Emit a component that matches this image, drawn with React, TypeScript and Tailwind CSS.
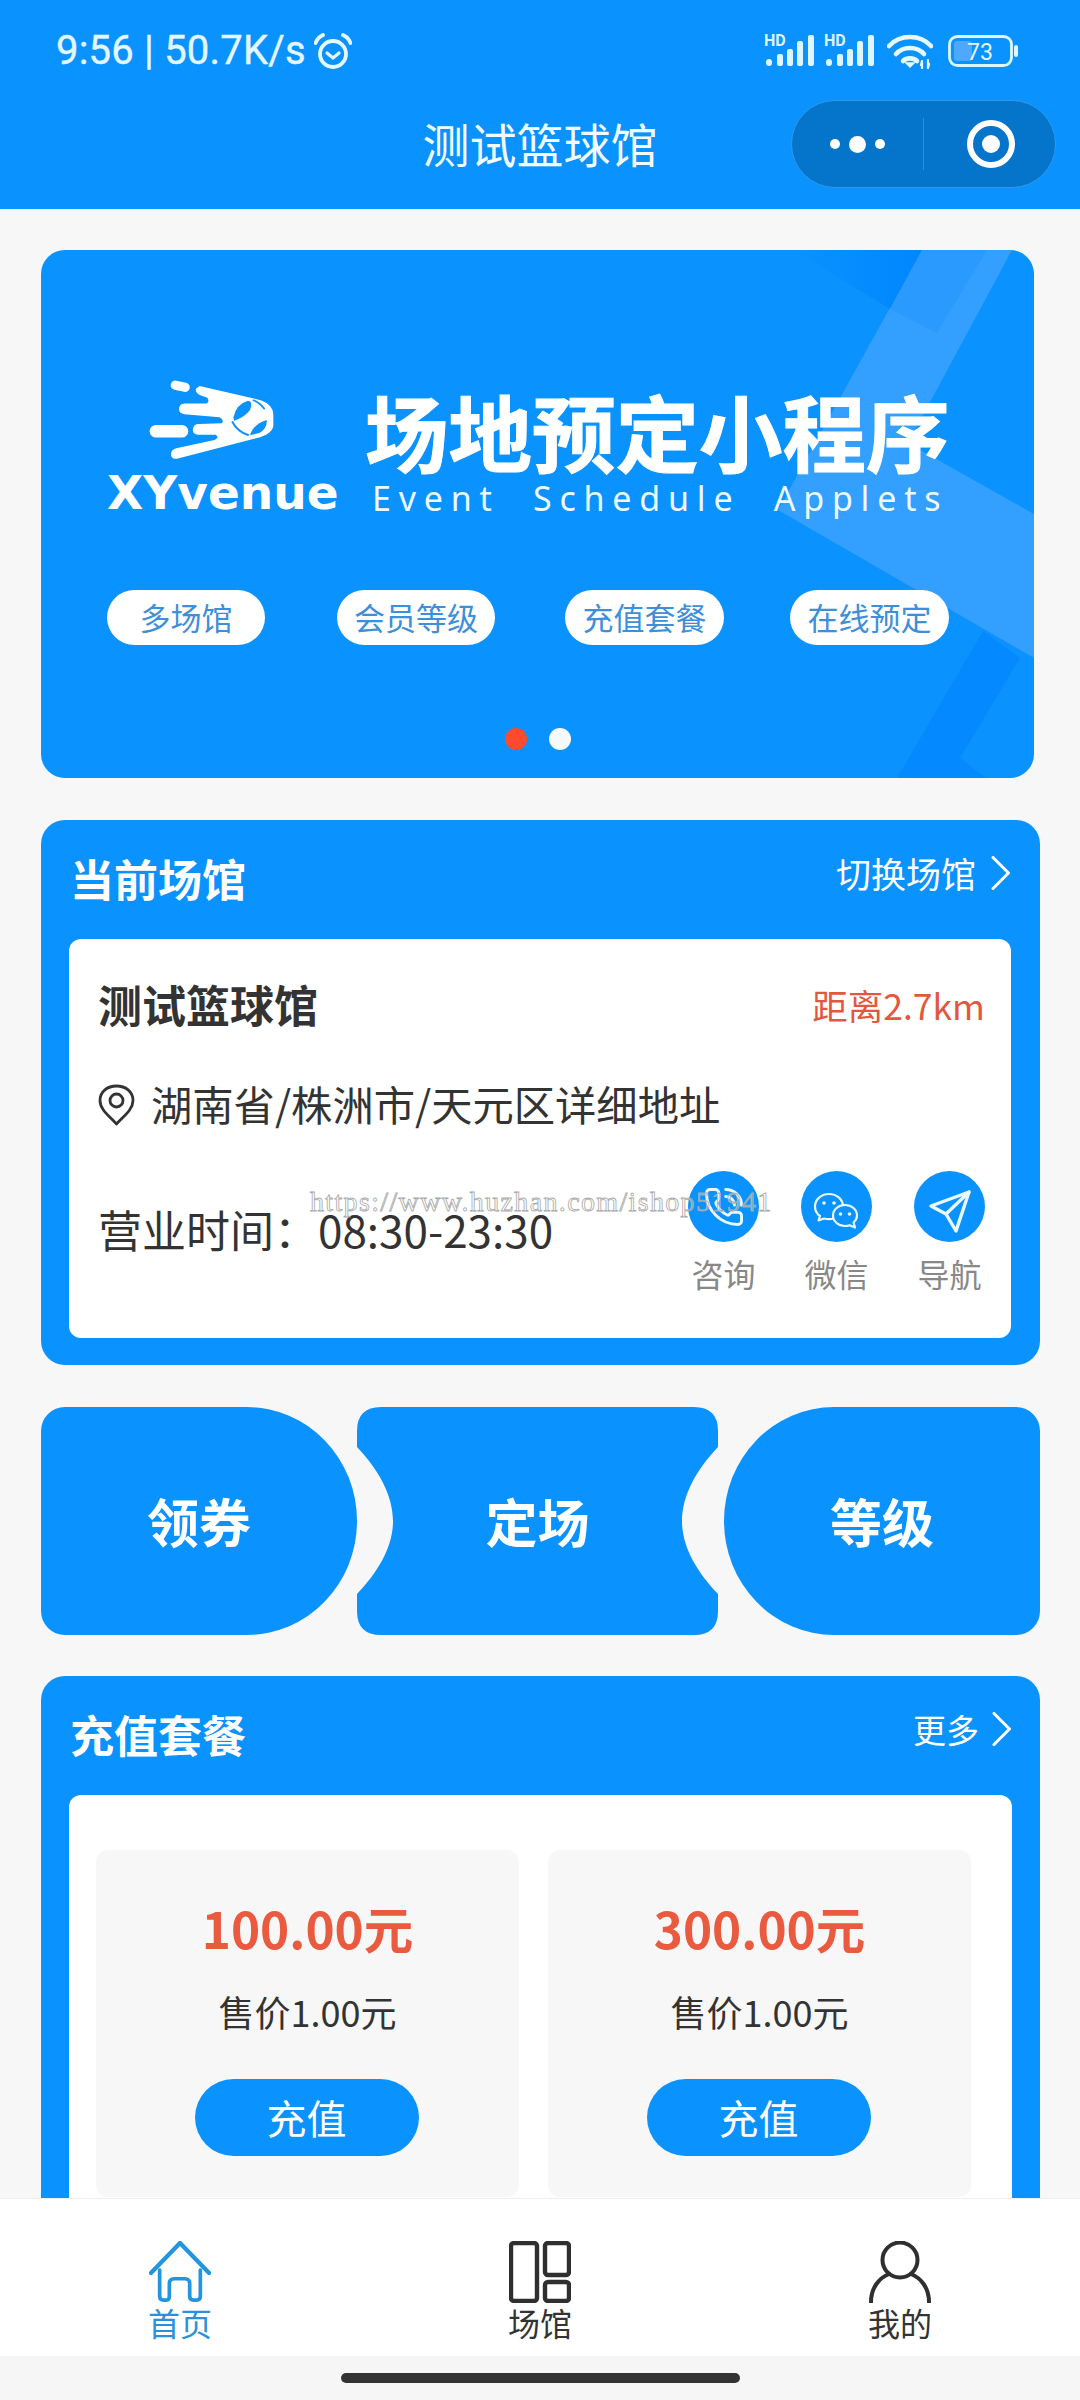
import type { ReactNode } from 'react';
import { PhoneCall } from 'lucide-react';

const Chevron = () => (
    <svg width="20" height="34" viewBox="0 0 20 34" fill="none" className="shrink-0">
        <path d="M2 1.500L17.500 17L2 32.500" stroke="white" strokeWidth="3" strokeLinecap="round" strokeLinejoin="round" />
    </svg>
);

const AlarmIcon = () => (
    <svg width="38" height="36" viewBox="0 0 38 36" fill="none" stroke="#e6f8ff" strokeLinecap="round" strokeLinejoin="round">
        <circle cx="19" cy="21" r="13" strokeWidth="3.800" />
        <path d="M13 20L19 25L25 20" strokeWidth="3.200" />
        <path d="M1.500 10C3 6 5.500 3.500 9 2" strokeWidth="3.800" />
        <path d="M36.500 10C35 6 32.500 3.500 29 2" strokeWidth="3.800" />
    </svg>
);

const SignalIcon = () => (
    <svg width="50" height="34" viewBox="0 0 50 34" fill="#dcf5ff" className="overflow-visible">
        <text x="0" y="12" fontFamily="Roboto, sans-serif" fontSize="16" fontWeight="700">HD</text>
        <rect x="2" y="25" width="6" height="7" rx="3" />
        <rect x="13" y="20" width="6" height="12" rx="2" />
        <rect x="23" y="15" width="6" height="17" rx="2" />
        <rect x="33" y="7" width="6" height="25" rx="2" />
        <rect x="44" y="1" width="6" height="31" rx="2" />
    </svg>
);

const WifiIcon = () => (
    <svg width="46" height="36" viewBox="0 0 46 36" fill="none" stroke="#e6f8ff" strokeWidth="4.600" strokeLinecap="round">
        <path d="M2 13C13 1 33 1 44 13" />
        <path d="M9 21C16 13 30 13 37 21" />
        <path d="M16 28C19.500 24.500 26.500 24.500 30 28" />
        <path d="M23 34L19 30H27Z" fill="#e6f8ff" strokeWidth="1.500" />
        <path d="M35 28V35M34 32L35 28M41 27V35M42 31L41 35" strokeWidth="2.200" />
    </svg>
);

const BatteryIcon = () => (
    <svg width="70" height="32" viewBox="0 0 70 32" fill="none">
        <rect x="1.500" y="1.500" width="62" height="29" rx="8" stroke="#dcf5ff" strokeWidth="2.800" />
        <rect x="6" y="6" width="18" height="20" rx="3" fill="#4da9ff" />
        <rect x="66" y="10" width="4" height="12" rx="2" fill="#dcf5ff" />
        <text x="32" y="25" textAnchor="middle" fontFamily="Roboto, sans-serif" fontSize="23" fill="#e6f8ff">73</text>
    </svg>
);

const CometLogo = () => (
    <svg width="125" height="80" viewBox="178 60 376 240" className="ml-[42px] block">
        <g fill="white">
            <path d="M330 78L505 118Q552 130 552 165V195Q552 222 500 235L265 296Q245 300 244 283Q244 270 260 265L375 240Q392 232 378 224L325 224Q308 222 310 208Q312 192 328 192L398 190Q404 178 390 172L285 163Q268 160 268 147Q268 132 285 130L352 130Q362 122 352 112L330 105Q315 95 320 85Z" />
            <rect x="180" y="195" width="116" height="38" rx="19" />
            <rect x="243" y="64" width="58" height="28" rx="14" transform="rotate(12 270 78)" />
        </g>
        <g fill="#0a92fe">
            <path d="M432 172Q440 132 476 122Q492 124 482 150Q466 172 434 182Z" />
            <path d="M482 226Q490 194 532 180Q534 206 510 219Z" />
        </g>
        <path d="M428 184Q442 214 478 226" fill="none" stroke="#0a92fe" strokeWidth="6" />
        <path d="M490 120Q510 126 526 148" fill="none" stroke="#0a92fe" strokeWidth="5" />
    </svg>
);

const PinIcon = () => (
    <svg width="37" height="42" viewBox="0 0 37 42" fill="none" stroke="#333" strokeWidth="2.800" strokeLinejoin="round" className="shrink-0">
        <path d="M18.500 40C10 31 2 25 2 16.500C2 7.500 9.500 2 18.500 2C27.500 2 35 7.500 35 16.500C35 25 27 31 18.500 40Z" />
        <circle cx="18.500" cy="16.500" r="6.500" />
    </svg>
);

const WechatIcon = () => (
    <svg width="71" height="71" viewBox="0 0 71 71" fill="none" stroke="#e8f8ff" strokeWidth="2.200" strokeLinejoin="round">
        <path d="M28 23C20 23 14 28.500 14 35.500C14 39.500 16 43 19 45L17.500 49.500L23 47.500C24.500 48 26 48.200 28 48.200C35.500 48.200 42 42.500 42 35.500C42 28.500 36 23 28 23Z" />
        <path d="M44 34C37.500 34 32 38.500 32 44.500C32 50.500 37.500 55 44 55C45.500 55 47 54.800 48.500 54.200L54 56.500L52.500 51.500C54.800 49.500 56 47 56 44.500C56 38.500 50.500 34 44 34Z" fill="#0a92fe" />
        <g fill="#e8f8ff" stroke="none">
            <circle cx="23" cy="32" r="1.800" />
            <circle cx="33" cy="32" r="1.800" />
            <circle cx="39.500" cy="43" r="1.800" />
            <circle cx="48.500" cy="43" r="1.800" />
        </g>
    </svg>
);

const SendIcon = () => (
    <svg width="71" height="71" viewBox="0 0 71 71" fill="none" stroke="#e8f8ff" strokeWidth="3.400" strokeLinejoin="round" strokeLinecap="round">
        <path d="M17 35L55 21L42 60L32 43Z" />
        <path d="M32 43L55 21" />
    </svg>
);

const HomeIcon = () => (
    <svg width="62" height="62" viewBox="0 0 64 64" fill="none" stroke="#2394e0" strokeLinecap="round" strokeLinejoin="round">
        <path d="M2 33L32 2L62 33" strokeWidth="4.400" />
        <path d="M11 30V57Q11 61 15 61H18Q21 61 21 57V44Q21 39 26 39H37Q42 39 42 44V57Q42 61 46 61H49Q53 61 53 57V30" strokeWidth="3.800" />
    </svg>
);

const VenueIcon = () => (
    <svg width="62" height="62" viewBox="0 0 62 62" fill="none" stroke="#2f2f2f" strokeWidth="4.400">
        <rect x="2" y="2" width="26" height="58" rx="3" />
        <rect x="36" y="2" width="24" height="32" rx="3" />
        <rect x="36" y="41" width="24" height="19" rx="3" />
    </svg>
);

const UserIcon = () => (
    <svg width="62" height="62" viewBox="0 0 62 62" fill="none" stroke="#2f2f2f" strokeWidth="4" strokeLinecap="round">
        <circle cx="31" cy="19" r="17.500" />
        <path d="M2 61C2 47 10 37 20 33" />
        <path d="M60 61C60 47 52 37 42 33" />
    </svg>
);

const SectionHead = ({ title, children }: { title: string; children: ReactNode }) => (
    <div className="h-[119px] pl-[1px] flex items-center justify-between">
        <h2 className="mb-[3px] text-[44px] leading-[60px] font-bold text-white">{title}</h2>
        <div className="mb-[14px] flex items-center">
            {children}
            <Chevron />
        </div>
    </div>
);

const PackageCard = ({ price }: { price: string }) => (
    <div className="w-[423px] h-[347px] rounded-xl bg-[#f7f7f8] pt-[48px] flex flex-col items-center">
        <div className="text-[49.500px] leading-[60px] font-bold text-[#ea5a3f]">{price}</div>
        <div className="mt-[28px] text-[36px] leading-[50px] text-[#333]">售价1.00元</div>
        <button className="mt-[43px] mr-[2px] w-[224px] h-[77px] rounded-full bg-[#0a92fe] text-[40px] leading-[77px] text-white">充值</button>
    </div>
);

export default function App() {
    return (
        <div lang="zh-CN" className="w-[1080px] h-[2400px] flex flex-col overflow-hidden bg-[#f7f7f8] font-['Noto_Sans_CJK_SC','Noto_Sans',sans-serif]">
            {/* header */}
            <header className="h-[209px] shrink-0 bg-[#0a92fe]">
                <div className="h-[100px] pl-[56px] pr-[62px] pt-[2px] flex items-center justify-between">
                    <div className="flex items-center gap-[8px]">
                        <span className="font-['Roboto',sans-serif] text-[40px] leading-[50px] tracking-[0.2px] text-[#e3f7ff] [-webkit-text-stroke:0.4px_#e3f7ff] whitespace-pre">9:56 | 50.7K/s</span>
                        <AlarmIcon />
                    </div>
                    <div className="flex items-center">
                        <SignalIcon />
                        <div className="w-[10px]" />
                        <SignalIcon />
                        <div className="w-[13px]" />
                        <WifiIcon />
                        <div className="w-[15px]" />
                        <BatteryIcon />
                    </div>
                </div>
                <div className="relative h-[88px] flex items-center justify-center">
                    <span className="mb-[2px] text-[47px] leading-[60px] text-[#f2fbff]">测试篮球馆</span>
                    <div className="absolute right-[24px] top-0 w-[265px] h-[88px] rounded-full bg-[#0574cb] border border-[#2f98ea] flex items-center">
                        <div className="w-[131px] flex items-center justify-center gap-[9px]">
                            <span className="w-[10px] h-[10px] rounded-full bg-white" />
                            <span className="w-[17px] h-[17px] rounded-full bg-white" />
                            <span className="w-[10px] h-[10px] rounded-full bg-white" />
                        </div>
                        <div className="w-px h-[52px] bg-[#2f8fd8]" />
                        <div className="flex-1 pl-[2px] flex items-center justify-center">
                            <div className="w-[48px] h-[48px] rounded-full border-[6px] border-white flex items-center justify-center">
                                <span className="w-[18px] h-[18px] rounded-full bg-white" />
                            </div>
                        </div>
                    </div>
                </div>
            </header>

            <main className="flex-1 min-h-0 overflow-hidden pt-[41px] pl-[41px] flex flex-col gap-[42px]">
                {/* banner */}
                <section className="relative shrink-0 w-[993px] h-[528px] rounded-[24px] overflow-hidden bg-[#0a92fe]">
                    <svg className="absolute inset-0" width="993" height="528" viewBox="0 0 993 528">
                        <defs>
                            <linearGradient id="topShade" x1="752" y1="0" x2="881" y2="0" gradientUnits="userSpaceOnUse">
                                <stop offset="0" stopColor="#0a92fe" />
                                <stop offset="1" stopColor="#0086ff" />
                            </linearGradient>
                        </defs>
                        <polygon points="881,0 971,0 867,193 993,264 993,408 737,260" fill="#339fff" />
                        <polygon points="752,0 881,0 849,59" fill="url(#topShade)" />
                        <polygon points="881,0 946,0 896,83 849,59" fill="#2a9aff" />
                        <polygon points="942,381 979,408 919,508 945,528 856,528" fill="#0589ff" />
                    </svg>
                    <div className="relative pt-[130px] pl-[66px]">
                        <div className="flex">
                            <div className="w-[229px]">
                                <CometLogo />
                                <div className="mt-[10px] text-center font-['DejaVu_Sans',sans-serif] font-bold text-[47px] leading-[46px] text-white whitespace-nowrap">XYvenue</div>
                            </div>
                            <div className="ml-[29px] pt-[9px]">
                                <div className="text-[83.500px] leading-[82px] font-bold text-white [-webkit-text-stroke:1px_white] whitespace-nowrap">场地预定小程序</div>
                                <div className="mt-[7px] ml-[7px] font-['Noto_Sans',sans-serif] text-[34px] leading-[40px] tracking-[7.800px] text-[#eef9ff] whitespace-pre">Event  Schedule  Applets</div>
                            </div>
                        </div>
                        <div className="mt-[72px] flex">
                            <div className="w-[158px] h-[55px] rounded-full bg-white text-center text-[31px] leading-[53px] text-[#3d8fd9]">多场馆</div>
                            <div className="ml-[72px] w-[158px] h-[55px] rounded-full bg-white text-center text-[31px] leading-[53px] text-[#3d8fd9]">会员等级</div>
                            <div className="ml-[70px] w-[159px] h-[55px] rounded-full bg-white text-center text-[31px] leading-[53px] text-[#3d8fd9]">充值套餐</div>
                            <div className="ml-[66px] w-[159px] h-[55px] rounded-full bg-white text-center text-[31px] leading-[53px] text-[#3d8fd9]">在线预定</div>
                        </div>
                        <div className="mt-[83px] -ml-[66px] flex justify-center gap-[22px]">
                            <span className="w-[22px] h-[22px] rounded-full bg-[#ff4a2e]" />
                            <span className="w-[22px] h-[22px] rounded-full bg-[#f5f9fb]" />
                        </div>
                    </div>
                </section>

                {/* current venue */}
                <section className="shrink-0 w-[999px] rounded-[24px] bg-[#0a92fe] pl-[28px] pr-[29px] pb-[27px]">
                    <SectionHead title="当前场馆">
                        <span className="mr-[15px] text-[35px] leading-[50px] text-white">切换场馆</span>
                    </SectionHead>
                    <div className="relative h-[399px] rounded-xl bg-white pl-[29px] pr-[26px] pt-[37px]">
                        <div className="h-[60px] flex items-center justify-between">
                            <span className="mb-[4px] text-[44px] leading-[60px] font-bold text-[#333]">测试篮球馆</span>
                            <span className="mb-[2px] text-[35.500px] leading-[50px] text-[#e2583e]">距离2.7km</span>
                        </div>
                        <div className="mt-[39px] h-[60px] flex items-center gap-[16px]">
                            <PinIcon />
                            <span className="mb-[5px] text-[41.300px] leading-[60px] text-[#333]">湖南省/株洲市/天元区详细地址</span>
                        </div>
                        <div className="mt-[36px] flex items-start justify-between">
                            <div className="mt-[28px] text-[44px] leading-[60px] text-[#333]">营业时间：08:30-23:30</div>
                            <div className="flex gap-[42px]">
                                <div className="w-[71px] flex flex-col items-center">
                                    <div className="w-[71px] h-[71px] rounded-full bg-[#0a92fe] flex items-center justify-center">
                                        <PhoneCall size={42} strokeWidth={1.7} color="#e8f8ff" />
                                    </div>
                                    <span className="mt-[11px] text-[32px] leading-[40px] text-[#888] whitespace-nowrap">咨询</span>
                                </div>
                                <div className="w-[71px] flex flex-col items-center">
                                    <div className="w-[71px] h-[71px] rounded-full bg-[#0a92fe]">
                                        <WechatIcon />
                                    </div>
                                    <span className="mt-[11px] text-[32px] leading-[40px] text-[#888] whitespace-nowrap">微信</span>
                                </div>
                                <div className="w-[71px] flex flex-col items-center">
                                    <div className="w-[71px] h-[71px] rounded-full bg-[#0a92fe]">
                                        <SendIcon />
                                    </div>
                                    <span className="mt-[11px] text-[32px] leading-[40px] text-[#888] whitespace-nowrap">导航</span>
                                </div>
                            </div>
                        </div>
                        {/* watermark */}
                        <div className="absolute left-[241px] top-[245px] font-['Liberation_Serif',serif] text-[28px] leading-[36px] tracking-[1.350px] text-white/40 [-webkit-text-stroke:0.8px_#a8a8a8] whitespace-nowrap">https://www.huzhan.com/ishop51941</div>
                    </div>
                </section>

                {/* quick actions */}
                <div className="shrink-0 w-[999px] h-[228px] flex">
                    <button className="w-[316px] h-full bg-[#0a92fe] rounded-[24px_110px_110px_24px/24px_114px_114px_24px] text-[52px] font-bold text-white">领券</button>
                    <button className="w-[361px] h-full bg-[#0a92fe] [clip-path:path('M24_0H337Q361_0_361_24V40C340_62_325_88_325_114C325_140_340_165_361_187V204Q361_228_337_228H24Q0_228_0_204V187C21_165_36_140_36_114C36_88_21_62_0_40V24Q0_0_24_0Z')] text-[52px] font-bold text-white">定场</button>
                    <button className="ml-[6px] w-[316px] h-full bg-[#0a92fe] rounded-[110px_24px_24px_110px/114px_24px_24px_114px] text-[52px] font-bold text-white">等级</button>
                </div>

                {/* packages */}
                <section className="shrink-0 -mt-px w-[999px] rounded-t-[24px] bg-[#0a92fe] pl-[28px] pr-[28px]">
                    <SectionHead title="充值套餐">
                        <span className="mr-[13px] text-[33px] leading-[50px] text-white">更多</span>
                    </SectionHead>
                    <div className="rounded-t-xl bg-white pt-[55px] pl-[27px] pb-[40px] flex gap-[29px]">
                        <PackageCard price="100.00元" />
                        <PackageCard price="300.00元" />
                    </div>
                </section>
            </main>

            {/* tab bar */}
            <nav className="relative h-[158px] shrink-0 bg-white border-t border-[#eeeeee] grid grid-cols-3 pt-[42px]">
                <div className="flex flex-col items-center">
                    <HomeIcon />
                    <span className="text-[32px] leading-[38px] text-[#2b90d9]">首页</span>
                </div>
                <div className="flex flex-col items-center">
                    <VenueIcon />
                    <span className="text-[32px] leading-[38px] text-[#333]">场馆</span>
                </div>
                <div className="flex flex-col items-center">
                    <UserIcon />
                    <span className="text-[32px] leading-[38px] text-[#333]">我的</span>
                </div>
            </nav>
            <div className="h-[44px] shrink-0 bg-[#f6f6f6] pt-[17px] flex justify-center">
                <div className="w-[399px] h-[10px] rounded-full bg-[#333]" />
            </div>
        </div>
    );
}
